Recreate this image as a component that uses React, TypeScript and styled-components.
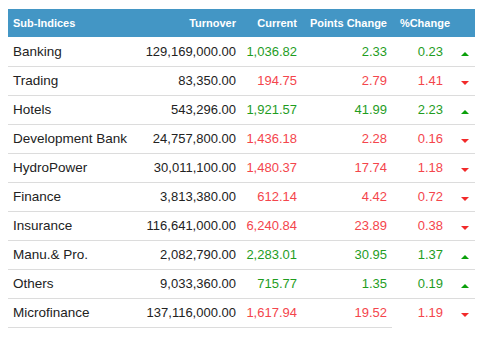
import styled, { createGlobalStyle } from 'styled-components';

const GlobalStyle = createGlobalStyle`
  body {
    margin: 8px;
    background: #fff;
    font-family: "Liberation Sans", Arial, sans-serif;
  }
`;

const Table = styled.table`
  margin-top: 1px;
  width: 467px;
  table-layout: fixed;
  border-collapse: separate;
  border-spacing: 0;
  font-family: "Liberation Sans", Arial, sans-serif;
`;

const HeadCell = styled.th<{ $align?: string; $pad?: number }>`
  background: #4396c5;
  color: #fff;
  font-size: 11px;
  font-weight: bold;
  line-height: 28px;
  padding: 0 ${(p) => p.$pad ?? 5}px 0 5px;
  text-align: ${(p) => p.$align ?? 'right'};
  border-bottom: 1px solid #fff;
  white-space: nowrap;
`;

const Cell = styled.td<{ $tone?: 'up' | 'down'; $pad?: number; $left?: boolean; $open?: boolean }>`
  font-size: ${(p) => (p.$left ? '13.5px' : '13px')};
  line-height: 28px;
  padding: 0 ${(p) => p.$pad ?? 5}px 0 5px;
  text-align: ${(p) => (p.$left ? 'left' : 'right')};
  color: ${(p) => (p.$tone === 'up' ? '#1f9d1f' : p.$tone === 'down' ? '#f4454c' : '#222')};
  border-bottom: 1px solid ${(p) => (p.$open ? 'transparent' : '#dcdcdc')};
  white-space: nowrap;
`;

const ArrowCell = styled.td<{ $open?: boolean }>`
  padding: 0;
  text-align: center;
  line-height: 28px;
  border-bottom: 1px solid ${(p) => (p.$open ? 'transparent' : '#dcdcdc')};
`;

const Arrow = styled.span<{ $dir: 'up' | 'down' }>`
  display: inline-block;
  width: 0;
  height: 0;
  vertical-align: middle;
  margin-top: 2px;
  border-left: 4px solid transparent;
  border-right: 4px solid transparent;
  ${(p) =>
    p.$dir === 'up'
      ? 'border-bottom: 4px solid #0aa00a;'
      : 'border-top: 4px solid #f22a2a;'}
`;

type Row = {
  name: string;
  turnover: string;
  current: string;
  points: string;
  pct: string;
  dir: 'up' | 'down';
};

const rows: Row[] = [
  { name: 'Banking', turnover: '129,169,000.00', current: '1,036.82', points: '2.33', pct: '0.23', dir: 'up' },
  { name: 'Trading', turnover: '83,350.00', current: '194.75', points: '2.79', pct: '1.41', dir: 'down' },
  { name: 'Hotels', turnover: '543,296.00', current: '1,921.57', points: '41.99', pct: '2.23', dir: 'up' },
  { name: 'Development Bank', turnover: '24,757,800.00', current: '1,436.18', points: '2.28', pct: '0.16', dir: 'down' },
  { name: 'HydroPower', turnover: '30,011,100.00', current: '1,480.37', points: '17.74', pct: '1.18', dir: 'down' },
  { name: 'Finance', turnover: '3,813,380.00', current: '612.14', points: '4.42', pct: '0.72', dir: 'down' },
  { name: 'Insurance', turnover: '116,641,000.00', current: '6,240.84', points: '23.89', pct: '0.38', dir: 'down' },
  { name: 'Manu.& Pro.', turnover: '2,082,790.00', current: '2,283.01', points: '30.95', pct: '1.37', dir: 'up' },
  { name: 'Others', turnover: '9,033,360.00', current: '715.77', points: '1.35', pct: '0.19', dir: 'up' },
  { name: 'Microfinance', turnover: '137,116,000.00', current: '1,617.94', points: '19.52', pct: '1.19', dir: 'down' },
];

const App = () => {
  return (
    <>
      <GlobalStyle />
      <Table>
        <colgroup>
          <col style={{ width: 130 }} />
          <col style={{ width: 103 }} />
          <col style={{ width: 61 }} />
          <col style={{ width: 90 }} />
          <col style={{ width: 63 }} />
          <col style={{ width: 20 }} />
        </colgroup>
        <thead>
          <tr>
            <HeadCell $align="left">Sub-Indices</HeadCell>
            <HeadCell>Turnover</HeadCell>
            <HeadCell>Current</HeadCell>
            <HeadCell>Points Change</HeadCell>
            <HeadCell>%Change</HeadCell>
            <HeadCell />
          </tr>
        </thead>
        <tbody>
          {rows.map((r, i) => {
            const last = i === rows.length - 1;
            return (
              <tr key={r.name}>
                <Cell $left>{r.name}</Cell>
                <Cell>{r.turnover}</Cell>
                <Cell $tone={r.dir}>{r.current}</Cell>
                <Cell $tone={r.dir}>{r.points}</Cell>
                <Cell $tone={r.dir} $pad={12} $open={last}>{r.pct}</Cell>
                <ArrowCell $open={last}>
                  <Arrow $dir={r.dir} />
                </ArrowCell>
              </tr>
            );
          })}
        </tbody>
      </Table>
    </>
  );
};

export default App;
